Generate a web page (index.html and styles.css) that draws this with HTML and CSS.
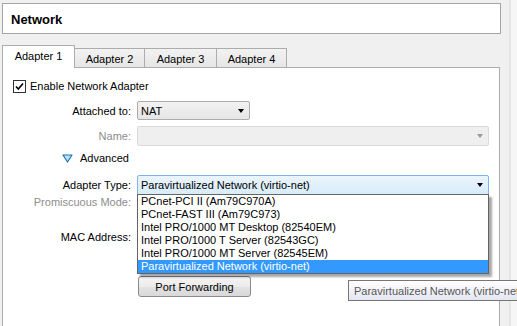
FILE: index.html
```html
<!DOCTYPE html>
<html>
<head>
<meta charset="utf-8">
<link rel="stylesheet" href="styles.css">
</head>
<body>
<div class="window">
  <div class="main">
    <div class="header"><span class="title">Network</span></div>
    <div class="tabs">
      <div class="tab active">Adapter 1</div>
      <div class="tab">Adapter 2</div>
      <div class="tab">Adapter 3</div>
      <div class="tab">Adapter 4</div>
    </div>
    <div class="panel">
      <div class="row row-cb">
        <span class="checkbox"><svg width="11" height="11" viewBox="0 0 11 11"><path d="M2 5.5 L4.3 8 L9 2.5" fill="none" stroke="#000" stroke-width="1.6"/></svg></span>
        <span class="cb-label">Enable Network Adapter</span>
      </div>
      <div class="row row-attached">
        <span class="label">Attached to:</span>
        <div class="combo combo-short"><span>NAT</span><span class="arrow"></span></div>
      </div>
      <div class="row row-name">
        <span class="label disabled">Name:</span>
        <div class="combo combo-long combo-disabled"><span></span><span class="arrow arrow-grey"></span></div>
      </div>
      <div class="row row-adv">
        <span class="adv-col"><svg width="11" height="9" viewBox="0 0 11 9"><path d="M1 1 L10 1 L5.5 8 Z" fill="#bfe4f7" stroke="#1f6fae" stroke-width="1.2" stroke-linejoin="round"/></svg></span>
        <span class="adv-text">Advanced</span>
      </div>
      <div class="row row-type">
        <span class="label">Adapter Type:</span>
        <div class="combo combo-long combo-focus"><span>Paravirtualized Network (virtio-net)</span><span class="arrow"></span></div>
        <ul class="dropdown">
          <li>PCnet-PCI II (Am79C970A)</li>
          <li>PCnet-FAST III (Am79C973)</li>
          <li>Intel PRO/1000 MT Desktop (82540EM)</li>
          <li>Intel PRO/1000 T Server (82543GC)</li>
          <li>Intel PRO/1000 MT Server (82545EM)</li>
          <li class="selected">Paravirtualized Network (virtio-net)</li>
        </ul>
      </div>
      <div class="row row-promisc">
        <span class="label disabled">Promiscuous Mode:</span>
      </div>
      <div class="row row-mac">
        <span class="label">MAC Address:</span>
      </div>
      <div class="row row-pf">
        <span class="label"></span>
        <button class="button">Port Forwarding</button>
        <div class="tooltip">Paravirtualized Network (virtio-net)</div>
      </div>
    </div>
  </div>
  <div class="edge"></div>
</div>
</body>
</html>
```

FILE: styles.css
```css
* { box-sizing: border-box; }
html, body {
  margin: 0;
  padding: 0;
  width: 517px;
  height: 326px;
  overflow: hidden;
  background: #f0f0f0;
  font-family: "Liberation Sans", Arial, sans-serif;
  font-size: 11px;
  color: #000;
}
.window {
  display: flex;
  height: 326px;
}
.main {
  width: 509px;
  padding: 3px 0 0 2px;
  display: flex;
  flex-direction: column;
}
.edge {
  flex: 1;
  border-left: 2px solid #e6e6e6;
  background: #f6f6f6;
}
.header {
  width: 499px;
  height: 31px;
  background: #fff;
  border: 1px solid #a5a5a5;
  display: flex;
  align-items: center;
  padding-left: 8px;
  padding-top: 1px;
}
.title {
  font-weight: bold;
  font-size: 13px;
}
.tabs {
  display: flex;
  align-items: flex-end;
  margin-top: 11px;
  height: 22px;
  position: relative;
  z-index: 1;
}
.tab {
  height: 19px;
  border: 1px solid #acacac;
  border-bottom: none;
  border-left: none;
  background: linear-gradient(#f2f2f2, #e6e6e6);
  display: flex;
  align-items: center;
  justify-content: center;
  white-space: nowrap;
  padding-top: 1px;
  flex-shrink: 0;
}
.tab:nth-child(2) { width: 70px; }
.tab:nth-child(3) { width: 72px; }
.tab:nth-child(4) { width: 70px; }
.tab.active {
  width: 73px;
  height: 23px;
  border-left: 1px solid #acacac;
  background: #fff;
  margin-bottom: -1px;
  padding-top: 0;
  padding-bottom: 3px;
}
.panel {
  width: 498px;
  flex: 1;
  background: #fff;
  border: 1px solid #acacac;
  border-bottom: none;
  display: flex;
  flex-direction: column;
  padding-top: 11px;
}
.row {
  display: flex;
  align-items: center;
  position: relative;
}
.label {
  width: 128px;
  text-align: right;
  flex-shrink: 0;
  margin-right: 6px;
}
.label.disabled { color: #8d8d8d; }
.row-cb { height: 14px; padding-left: 10px; }
.checkbox {
  width: 13px;
  height: 13px;
  border: 1px solid #333;
  background: #fff;
  display: flex;
  align-items: center;
  justify-content: center;
}
.cb-label { margin-left: 4px; }
.row-attached { height: 19px; margin-top: 8px; }
.row-name { height: 20px; margin-top: 6px; }
.row-adv { height: 14px; margin-top: 5px; }
.adv-col { width: 70px; margin-right: 7px; display: flex; justify-content: flex-end; padding-top: 1px; }
.row-type { height: 20px; margin-top: 10px; }
.row-promisc { height: 14px; margin-top: 0; }
.row-mac { height: 19px; margin-top: 18px; }
.row-pf { height: 21px; margin-top: 30px; }

.combo {
  height: 100%;
  border: 1px solid #acacac;
  border-radius: 2px;
  background: linear-gradient(#f2f2f2, #e6e6e6);
  display: flex;
  align-items: center;
  justify-content: space-between;
  padding: 0 5px 0 3px;
}
.combo-short { width: 113px; }
.combo-long { width: 352px; }
.combo-disabled {
  border-color: #d9d9d9;
  background: #efefef;
}
.combo-focus {
  border-color: #7eb4ea;
  background: linear-gradient(#ebf5fc, #d7ecfa);
  border-radius: 2px 2px 0 0;
}
.arrow {
  width: 0;
  height: 0;
  border-left: 3.5px solid transparent;
  border-right: 3.5px solid transparent;
  border-top: 4px solid #000;
}
.arrow-grey { border-top-color: #9a9a9a; }

.dropdown {
  position: absolute;
  left: 134px;
  top: 19px;
  width: 352px;
  margin: 0;
  padding: 0;
  list-style: none;
  background: #fff;
  border: 1px solid #646464;
  box-shadow: 3px 3px 2px rgba(0, 0, 0, 0.35);
  z-index: 5;
}
.dropdown li {
  height: 13px;
  line-height: 13px;
  padding-left: 3px;
  white-space: nowrap;
}
.dropdown li.selected {
  background: #3399ff;
  color: #fff;
}
.button {
  width: 113px;
  height: 21px;
  margin-left: 1px;
  border: 1px solid #8a8a8a;
  border-radius: 3px;
  background: linear-gradient(#f4f4f4 0%, #ececec 50%, #e2e2e2 51%, #d9d9d9 100%);
  font-family: inherit;
  font-size: 11px;
  color: #000;
  padding: 0;
}
.tooltip {
  position: absolute;
  left: 345px;
  top: 4px;
  height: 21px;
  padding: 0 0 0 5px;
  border: 1px solid #767676;
  background: linear-gradient(#ffffff, #e4e5f0);
  color: #575757;
  white-space: nowrap;
  display: flex;
  align-items: center;
  z-index: 6;
}
```
